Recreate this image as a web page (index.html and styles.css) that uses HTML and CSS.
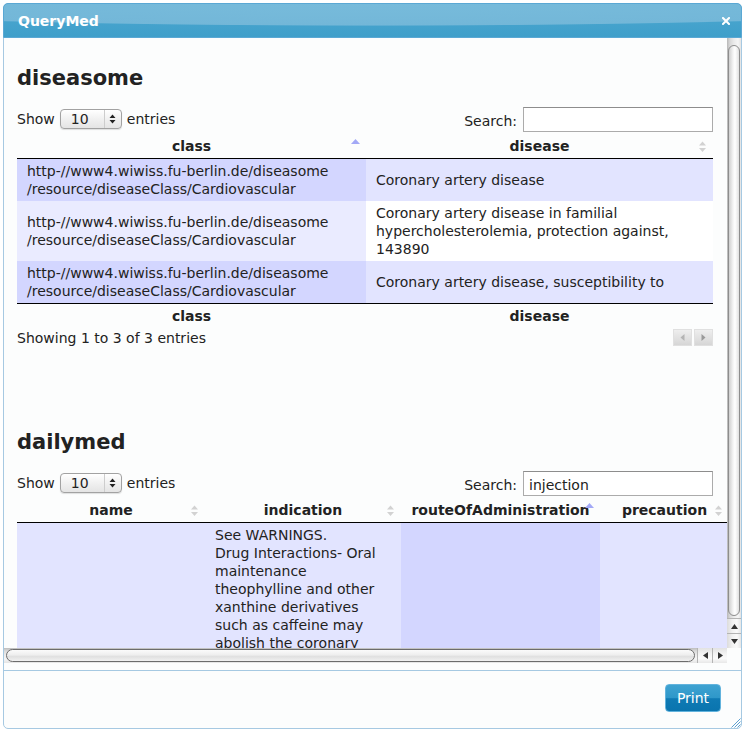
FILE: index.html
```html
<!DOCTYPE html>
<html>
<head>
<meta charset="utf-8">
<title>QueryMed</title>
<link rel="stylesheet" href="styles.css">
</head>
<body>
<div class="dialog">
  <div class="titlebar">
    <span class="title">QueryMed</span>
    <svg class="close" width="8" height="8" viewBox="0 0 8 8"><path d="M1 1L7 7M7 1L1 7" stroke="#fff" stroke-width="2" stroke-linecap="square"/></svg>
  </div>

  <div class="vrow">
    <div class="scroll-area">
      <section class="section">
        <h2>diseasome</h2>
        <div class="dt-top">
          <div class="length">
            <span>Show</span>
            <span class="select"><span class="val">10</span><span class="arrows"><svg width="7" height="10" viewBox="0 0 7 10"><path d="M0.5 4L3.5 0.5L6.5 4Z M0.5 6L3.5 9.5L6.5 6Z" fill="#222"/></svg></span></span>
            <span>entries</span>
          </div>
          <label class="filter"><span class="lbl">Search:</span><input class="search" type="text" value=""></label>
        </div>
        <table class="dt t1">
          <colgroup><col class="w-class"><col class="w-disease"></colgroup>
          <thead>
            <tr>
              <th>class<svg class="sort" viewBox="0 0 17 18"><path d="M4 6L8.5 1L13 6Z" fill="#a3a9f6"/></svg></th>
              <th>disease<svg class="sort" viewBox="0 0 17 18"><path d="M5 7.5L8.5 3.5L12 7.5Z M5 10L8.5 14L12 10Z" fill="#d2d2d2"/></svg></th>
            </tr>
          </thead>
          <tbody>
            <tr class="odd">
              <td class="s1">http-//www4.wiwiss.fu-berlin.de/diseasome<br>/resource/diseaseClass/Cardiovascular</td>
              <td>Coronary artery disease</td>
            </tr>
            <tr class="even">
              <td class="s1">http-//www4.wiwiss.fu-berlin.de/diseasome<br>/resource/diseaseClass/Cardiovascular</td>
              <td>Coronary artery disease in familial<br>hypercholesterolemia, protection against,<br>143890</td>
            </tr>
            <tr class="odd">
              <td class="s1">http-//www4.wiwiss.fu-berlin.de/diseasome<br>/resource/diseaseClass/Cardiovascular</td>
              <td>Coronary artery disease, susceptibility to</td>
            </tr>
          </tbody>
          <tfoot>
            <tr><th>class</th><th>disease</th></tr>
          </tfoot>
        </table>
        <div class="dt-bottom">
          <span class="info">Showing 1 to 3 of 3 entries</span>
          <span class="paginate">
            <span class="pbtn"><svg width="5" height="7" viewBox="0 0 5 7"><path d="M4.5 0L0.5 3.5L4.5 7Z" fill="#b4b4b4"/></svg></span>
            <span class="pbtn"><svg width="5" height="7" viewBox="0 0 5 7"><path d="M0.5 0L4.5 3.5L0.5 7Z" fill="#9a9a9a"/></svg></span>
          </span>
        </div>
      </section>

      <section class="section">
        <h2>dailymed</h2>
        <div class="dt-top">
          <div class="length">
            <span>Show</span>
            <span class="select"><span class="val">10</span><span class="arrows"><svg width="7" height="10" viewBox="0 0 7 10"><path d="M0.5 4L3.5 0.5L6.5 4Z M0.5 6L3.5 9.5L6.5 6Z" fill="#222"/></svg></span></span>
            <span>entries</span>
          </div>
          <label class="filter"><span class="lbl">Search:</span><input class="search" type="text" value="injection"></label>
        </div>
        <table class="dt t2">
          <colgroup><col class="w-name"><col class="w-ind"><col class="w-route"><col class="w-prec"></colgroup>
          <thead>
            <tr>
              <th>name<svg class="sort" viewBox="0 0 17 18"><path d="M5 7.5L8.5 3.5L12 7.5Z M5 10L8.5 14L12 10Z" fill="#d2d2d2"/></svg></th>
              <th>indication<svg class="sort" viewBox="0 0 17 18"><path d="M5 7.5L8.5 3.5L12 7.5Z M5 10L8.5 14L12 10Z" fill="#d2d2d2"/></svg></th>
              <th>routeOfAdministration<svg class="sort" viewBox="0 0 17 18"><path d="M4 6L8.5 1L13 6Z" fill="#a3a9f6"/></svg></th>
              <th>precaution<svg class="sort" viewBox="0 0 17 18"><path d="M5 7.5L8.5 3.5L12 7.5Z M5 10L8.5 14L12 10Z" fill="#d2d2d2"/></svg></th>
            </tr>
          </thead>
          <tbody>
            <tr class="odd">
              <td></td>
              <td class="top">See WARNINGS.<br>Drug Interactions- Oral<br>maintenance<br>theophylline and other<br>xanthine derivatives<br>such as caffeine may<br>abolish the coronary</td>
              <td class="s1"></td>
              <td></td>
            </tr>
          </tbody>
        </table>
      </section>
    </div>

    <div class="vscroll">
      <div class="vtrack"><div class="vthumb"></div></div>
      <div class="varrow"><svg width="7" height="5" viewBox="0 0 7 5"><path d="M0 5L3.5 0L7 5Z" fill="#333"/></svg></div>
      <div class="varrow"><svg width="7" height="5" viewBox="0 0 7 5"><path d="M0 0L3.5 5L7 0Z" fill="#333"/></svg></div>
    </div>
  </div>

  <div class="hscroll">
    <div class="htrack"><div class="hthumb"></div></div>
    <div class="harrow"><svg width="5" height="7" viewBox="0 0 5 7"><path d="M5 0L0 3.5L5 7Z" fill="#333"/></svg></div>
    <div class="harrow"><svg width="5" height="7" viewBox="0 0 5 7"><path d="M0 0L5 3.5L0 7Z" fill="#333"/></svg></div>
    <div class="corner"></div>
  </div>

  <div class="buttonpane">
    <button class="print" type="button">Print</button>
  </div>
  <svg class="grip" width="11" height="11" viewBox="0 0 11 11"><path d="M10.5 1.5L1.5 10.5M10.5 4.5L4.5 10.5M10.5 7.5L7.5 10.5" stroke="#5c9fd0" stroke-width="1"/></svg>
</div>
</body>
</html>
```

FILE: styles.css
```css
html, body {
  margin: 0;
  padding: 0;
  background: #ffffff;
}

body {
  font-family: "DejaVu Sans", Verdana, sans-serif;
  font-size: 14px;
  color: #222222;
}

.dialog {
  position: relative;
  box-sizing: border-box;
  width: 739px;
  height: 726px;
  margin: 3px 0 0 3px;
  border: 1px solid #a6c9e2;
  border-radius: 5px;
  background: #fcfdfd;
  display: flex;
  flex-direction: column;
}

.titlebar {
  flex: none;
  box-sizing: border-box;
  height: 35px;
  margin: -1px -1px 0 -1px;
  border: 1px solid #5aa8d4;
  border-radius: 5px 5px 0 0;
  background:
    radial-gradient(620px 22px at 50% 0, #77bbdb 0, #73b7d8 96%, rgba(115, 183, 216, 0) 100%),
    linear-gradient(#4da8d0, #3f9fca);
  display: flex;
  align-items: center;
  justify-content: space-between;
  padding: 0 11px 0 14px;
  color: #ffffff;
  font-weight: bold;
  font-size: 14px;
}

.title {
  line-height: 18px;
  padding-top: 1px;
}

.close {
  display: block;
  margin-top: 1px;
}

/* scroll viewport */
.vrow {
  flex: none;
  height: 610px;
  display: flex;
}

.scroll-area {
  flex: 1;
  min-width: 0;
  overflow: hidden;
  box-sizing: border-box;
  padding: 27px 14px 0 13px;
  display: flex;
  flex-direction: column;
  gap: 82px;
}

.section {
  flex: none;
}

h2 {
  margin: 0;
  font-size: 21px;
  line-height: 26px;
  font-weight: bold;
  color: #222222;
}

.dt-top {
  display: flex;
  justify-content: space-between;
  align-items: flex-start;
  height: 26px;
  margin-top: 17px;
}

.length {
  display: flex;
  align-items: center;
  gap: 5px;
  height: 20px;
  margin-top: 1px;
  line-height: 18px;
}

.select {
  box-sizing: border-box;
  width: 62px;
  height: 20px;
  display: flex;
  align-items: stretch;
  border: 1px solid #a2a2a2;
  border-radius: 4px;
  background: linear-gradient(#ffffff, #f1f1f1 50%, #e4e4e4);
  box-shadow: 0 1px 1px rgba(0, 0, 0, 0.12);
}

.select .val {
  flex: 1;
  padding-left: 10px;
  line-height: 18px;
}

.select .arrows {
  width: 16px;
  border-left: 1px solid #cdcdcd;
  display: flex;
  align-items: center;
  justify-content: center;
}

.select .arrows svg {
  display: block;
}

.filter {
  display: flex;
  align-items: center;
  gap: 6px;
  margin-top: -1px;
}

.filter .lbl {
  padding-top: 3px;
  line-height: 18px;
}

.search {
  box-sizing: border-box;
  width: 190px;
  height: 25px;
  margin: 0;
  padding: 3px 5px 0 5px;
  border: 1px solid #ababab;
  border-top-color: #8d8d8d;
  border-radius: 0;
  background: #ffffff;
  font-family: "DejaVu Sans", Verdana, sans-serif;
  font-size: 14px;
  color: #222222;
  outline: none;
}

/* tables */
.dt {
  table-layout: fixed;
  border-collapse: separate;
  border-spacing: 0;
}

.t1 { width: 696px; }
.t2 { width: 712px; }

.w-class { width: 349px; }
.w-disease { width: 347px; }
.w-name { width: 188px; }
.w-ind { width: 196px; }
.w-route { width: 199px; }
.w-prec { width: 129px; }

.dt th {
  position: relative;
  padding: 3px 10px;
  line-height: 18px;
  font-weight: bold;
  text-align: center;
  white-space: nowrap;
  overflow: visible;
}

.dt thead th {
  border-bottom: 1px solid #000000;
}

.dt tfoot th {
  border-top: 1px solid #000000;
}

.sort {
  position: absolute;
  right: 2px;
  top: 4px;
  width: 17px;
  height: 18px;
}

.dt td {
  padding: 3px 10px;
  line-height: 18px;
  vertical-align: middle;
  text-align: left;
}

.dt td.top {
  vertical-align: top;
}

.odd td { background: #e2e4ff; }
.odd td.s1 { background: #d3d6ff; }
.even td { background: #ffffff; }
.even td.s1 { background: #eaebff; }

.dt-bottom {
  display: flex;
  justify-content: space-between;
  align-items: flex-start;
  margin-top: 1px;
  line-height: 18px;
}

.paginate {
  display: flex;
  gap: 2px;
}

.pbtn {
  box-sizing: border-box;
  width: 19px;
  height: 17px;
  display: flex;
  align-items: center;
  justify-content: center;
  background: linear-gradient(#eeeeee, #d6d6d6);
  border: 1px solid #e0e0e0;
}

.pbtn svg { display: block; }

/* fake scrollbars */
.vscroll {
  flex: none;
  width: 14px;
  display: flex;
  flex-direction: column;
  background: linear-gradient(to right, #b8b8b8, #d9d9d9 3px, #ebebeb 7px, #f5f5f5 11px, #e3e3e3);
}

.vtrack {
  flex: 1;
  display: flex;
  padding: 7px 1px 2px 1px;
}

.vthumb {
  flex: 1;
  border: 1px solid #8d8d8d;
  border-radius: 6px;
  background: linear-gradient(to right, #cfcfcf, #f3f3f3 40%, #ffffff 60%, #e0e0e0);
}

.varrow {
  flex: none;
  box-sizing: border-box;
  height: 15px;
  border-top: 1px solid #b4b4b4;
  display: flex;
  align-items: center;
  justify-content: center;
  background: linear-gradient(to right, #dcdcdc, #f2f2f2 40%, #fafafa 70%, #e6e6e6);
}

.varrow svg, .harrow svg { display: block; }

.hscroll {
  flex: none;
  height: 15px;
  display: flex;
  background: linear-gradient(#bdbdbd, #dadada 3px, #ececec 7px, #f5f5f5 11px, #e4e4e4);
}

.htrack {
  flex: 1;
  display: flex;
  padding: 1px 2px;
}

.hthumb {
  flex: 1;
  border: 1px solid #6c6c6c;
  border-radius: 7px;
  background: linear-gradient(#fbfbfb, #eeeeee 45%, #e0e0e0 60%, #f1f1f1);
}

.harrow {
  flex: none;
  box-sizing: border-box;
  width: 15px;
  border-left: 1px solid #b4b4b4;
  display: flex;
  align-items: center;
  justify-content: center;
  background: linear-gradient(#e2e2e2, #f4f4f4 40%, #fafafa 70%, #e8e8e8);
}

.corner {
  flex: none;
  width: 14px;
  background: #fcfdfd;
}

/* button pane */
.buttonpane {
  flex: 1;
  margin-top: 7px;
  border-top: 1px solid #a6c9e2;
  display: flex;
  justify-content: flex-end;
  align-items: flex-start;
  padding: 13px 20px 0 0;
}

.print {
  box-sizing: border-box;
  width: 56px;
  height: 28px;
  margin: 0;
  padding: 0;
  border: 1px solid #62b3dd;
  border-radius: 4px;
  background: linear-gradient(#3ea2d1 0%, #2f98ca 48%, #0f7ab4 53%, #0a74ae 100%);
  color: #ffffff;
  font-family: "DejaVu Sans", Verdana, sans-serif;
  font-size: 14px;
  line-height: 18px;
  cursor: pointer;
}

.grip {
  position: absolute;
  right: 0;
  bottom: 0;
  display: block;
}
```
